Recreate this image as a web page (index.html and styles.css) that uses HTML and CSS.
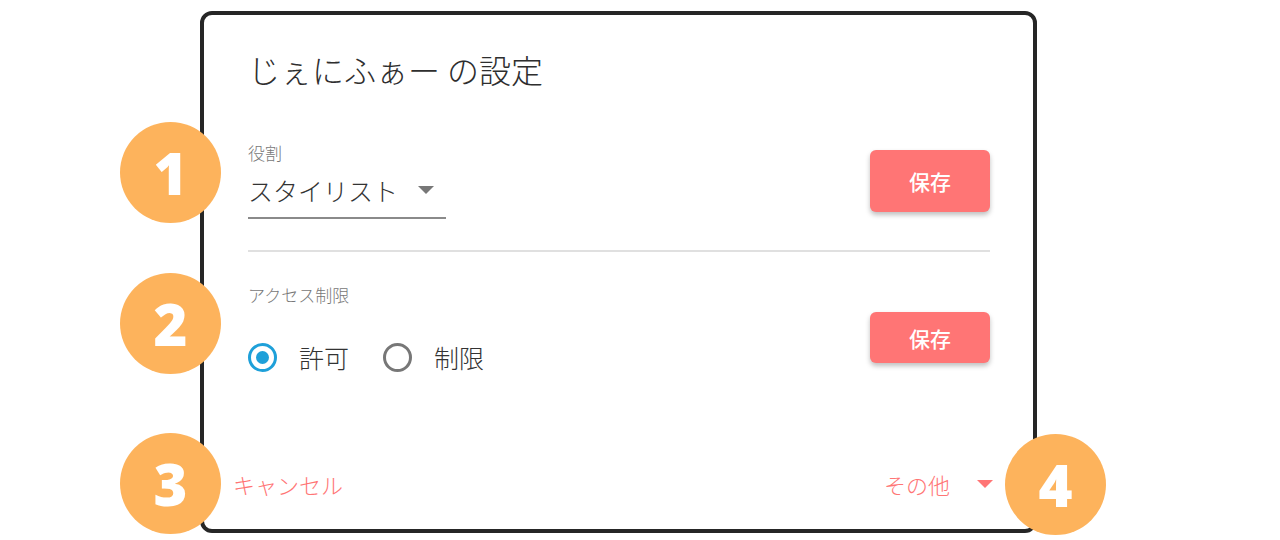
FILE: index.html
```html
<!DOCTYPE html>
<html lang="ja">
<head>
  <meta charset="UTF-8">
  <meta name="viewport" content="width=device-width, initial-scale=1.0">
  <title>じぇにふぁー の設定</title>
  <link rel="stylesheet" href="styles.css">
</head>
<body>

  <div class="stage">
    <div class="card">
      <h1 class="title">じぇにふぁー の設定</h1>

      <div class="section section-role">
        <div class="field">
          <div class="field-label">役割</div>
          <div class="select">
            <span class="select-value">スタイリスト</span>
            <span class="caret caret-grey"></span>
          </div>
        </div>
        <button class="save save-tall">保存</button>
      </div>

      <div class="divider"></div>

      <div class="section section-access">
        <div class="field">
          <div class="field-label">アクセス制限</div>
          <div class="radios">
            <label class="radio">
              <span class="radio-ring checked"><span class="radio-dot"></span></span>
              <span class="radio-text">許可</span>
            </label>
            <label class="radio">
              <span class="radio-ring"></span>
              <span class="radio-text">制限</span>
            </label>
          </div>
        </div>
        <button class="save save-short">保存</button>
      </div>

      <div class="footer">
        <span class="link">キャンセル</span>
        <span class="link more">その他<span class="caret caret-pink"></span></span>
      </div>
    </div>

    <div class="badge badge-1">1</div>
    <div class="badge badge-2">2</div>
    <div class="badge badge-3">3</div>
    <div class="badge badge-4">4</div>
  </div>

</body>
</html>
```

FILE: styles.css
```css
body {
  margin: 0;
  padding: 0;
  background-color: #ffffff;
  font-family: "Noto Sans CJK JP", "Noto Sans", sans-serif;
  color: #333333;
}
.stage {
  position: relative;
  width: 1280px;
  height: 540px;
  overflow: hidden;
}
.card {
  box-sizing: border-box;
  width: 837px;
  height: 522px;
  margin: 11px 0 0 200px;
  padding: 35px 43px 0 44px;
  border: 4px solid #262626;
  border-radius: 12px;
  background-color: #ffffff;
}
.title {
  margin: 0;
  font-size: 32px;
  line-height: 38px;
  font-weight: 300;
  color: #2e2e2e;
}
.section {
  display: flex;
  justify-content: space-between;
}
.section-role {
  margin-top: 54px;
  align-items: center;
}
.section-access {
  margin-top: 32px;
  align-items: flex-start;
}
.field-label {
  font-size: 17px;
  line-height: 22px;
  font-weight: 300;
  color: #777777;
}
.select {
  display: flex;
  align-items: center;
  width: 198px;
  margin-top: 10px;
  padding-bottom: 11px;
  border-bottom: 2px solid #8a8a8a;
}
.select-value {
  font-size: 25px;
  line-height: 32px;
  font-weight: 300;
  color: #333333;
}
.caret {
  display: inline-block;
  width: 0;
  height: 0;
  border-left: 8px solid transparent;
  border-right: 8px solid transparent;
}
.caret-grey {
  margin-left: 20px;
  border-top: 8px solid #777777;
}
.caret-pink {
  margin-left: 27px;
  border-top: 8px solid #ff7575;
}
.save {
  width: 120px;
  border: none;
  border-radius: 6px;
  background-color: #ff7575;
  color: #ffffff;
  font-family: "Noto Sans CJK JP", sans-serif;
  font-size: 21px;
  font-weight: 500;
  box-shadow: 0 3px 5px rgba(0, 0, 0, 0.25);
  cursor: pointer;
}
.save-tall {
  height: 62px;
}
.save-short {
  height: 51px;
  margin-top: 28px;
}
.divider {
  height: 2px;
  margin-top: 31px;
  background-color: #e0e0e0;
}
.radios {
  display: flex;
  align-items: center;
  margin-top: 35px;
  height: 32px;
}
.radio {
  display: flex;
  align-items: center;
  margin-right: 34px;
}
.radio-ring {
  box-sizing: border-box;
  display: flex;
  align-items: center;
  justify-content: center;
  width: 29px;
  height: 29px;
  border: 3px solid #777777;
  border-radius: 50%;
}
.radio-ring.checked {
  border-color: #1ea0d9;
}
.radio-dot {
  width: 13px;
  height: 13px;
  border-radius: 50%;
  background-color: #1ea0d9;
}
.radio-text {
  margin-left: 22px;
  font-size: 25px;
  line-height: 32px;
  font-weight: 300;
  color: #333333;
}
.footer {
  display: flex;
  justify-content: space-between;
  align-items: center;
  margin: 96px -3px 0 -15px;
}
.link {
  font-size: 22px;
  line-height: 30px;
  font-weight: 300;
  color: #ff7575;
}
.more {
  display: flex;
  align-items: center;
}
.badge {
  position: absolute;
  width: 101px;
  height: 101px;
  border-radius: 50%;
  background-color: #fdb35c;
  color: #ffffff;
  font-family: "Open Sans", sans-serif;
  font-weight: 800;
  font-size: 58px;
  line-height: 101px;
  text-align: center;
}
.badge-1 { left: 120px; top: 122px; }
.badge-2 { left: 120px; top: 273px; }
.badge-3 { left: 120px; top: 433px; }
.badge-4 { left: 1005px; top: 434px; }
```
